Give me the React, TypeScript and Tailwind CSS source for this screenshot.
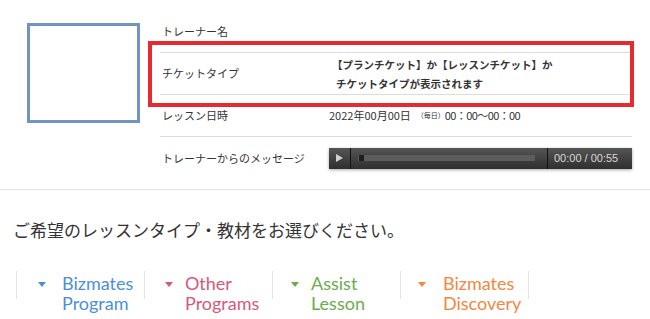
const jp = "font-['Noto_Sans_CJK_JP','Noto_Sans',sans-serif]";

const tabs = [
  { label: ['Bizmates', 'Program'], color: 'text-[#4a90d9]', fill: '#4a90d9', pad: 'pl-[21px]', gap: 'w-[16px]' },
  { label: ['Other', 'Programs'], color: 'text-[#d9577b]', fill: '#d9577b', pad: 'pl-[20px]', gap: 'w-[12px]' },
  { label: ['Assist', 'Lesson'], color: 'text-[#6aac4f]', fill: '#6aac4f', pad: 'pl-[18px]', gap: 'w-[12px]' },
  { label: ['Bizmates', 'Discovery'], color: 'text-[#f5863e]', fill: '#f5863e', pad: 'pl-[17px]', gap: 'w-[17px]' },
];

function Player() {
  return (
    <div className="flex h-[21px] w-[304px] items-stretch bg-gradient-to-b from-[#555] to-[#2f2f2f] shadow-[0_1px_3px_rgba(0,0,0,0.35)]">
      <div className="flex w-[22px] items-center justify-center border-r border-[#111]">
        <svg width="7" height="8" viewBox="0 0 7 8">
          <path d="M0 0 L7 4 L0 8 Z" fill="#d0d0d0" />
        </svg>
      </div>
      <div className="flex flex-1 items-center pl-[7px] pr-[12px]">
        <div className="relative h-[6px] w-full bg-[#5c5c5c]">
          <div className="absolute left-[1px] top-0 h-[6px] w-[5px] bg-[#1e1e1e]" />
        </div>
      </div>
      <div className="flex w-[85px] items-center border-l border-[#111] pl-[6px] font-['Liberation_Sans',sans-serif] text-[11px] text-[#d8d8d8]">
        00:00 / 00:55
      </div>
    </div>
  );
}

export default function App() {
  return (
    <div className={`relative h-[319px] w-[650px] overflow-hidden bg-white ${jp} text-[#333]`}>
      <div className="flex border-b border-[#e3e3e3] pb-[10px] pt-[11px]">
        <div className="ml-[27px] mt-[12px] h-[100px] w-[113px] border-[3px] border-[#7194c3]" />
        <div className="ml-[20px] w-[472px] text-[11px]">
          <div className="flex h-[42px] items-center border-b border-[#dcdcdc] pl-[2px]">トレーナー名</div>
          <div className="flex h-[42px] items-center border-b border-[#dcdcdc]">
            <div className="w-[169px] pl-[2px]">チケットタイプ</div>
            <div className="pl-[3px] text-[10.5px] font-bold leading-[19px]">
              <div>【プランチケット】か【レッスンチケット】か</div>
              <div className="pl-[4px]">チケットタイプが表示されます</div>
            </div>
          </div>
          <div className="flex h-[42px] items-center border-b border-[#dcdcdc]">
            <div className="w-[169px] pl-[2px]">レッスン日時</div>
            <div className="flex items-center">
              <span>2022年00月00日</span>
              <span className="ml-[6px] text-[7px]">（毎日）</span>
              <span className="tracking-[-0.6px]">00：00〜00：00</span>
            </div>
          </div>
          <div className="flex h-[42px] items-center">
            <div className="w-[169px] pl-[2px]">トレーナーからのメッセージ</div>
            <Player />
          </div>
        </div>
      </div>

      <div className="pl-[13px] pt-[28px] text-[17px] leading-[24px] text-[#333]">
        ご希望のレッスンタイプ・教材をお選びください。
      </div>

      <div className="ml-[16px] mt-[29px] flex w-fit border-r border-[#e3e3e3]">
        {tabs.map((t) => (
          <div key={t.label[0] + t.label[1]} className={`flex h-[28px] w-[128px] border-l border-[#e3e3e3] ${t.pad}`}>
            <svg width="8" height="5" viewBox="0 0 8 5" className="mt-[11px] shrink-0">
              <path d="M0 0 L8 0 L4 5 Z" fill={t.fill} />
            </svg>
            <div className={`${t.gap} shrink-0`} />
            <div className={`pt-[2px] font-['Lato',sans-serif] text-[18px] leading-[20px] whitespace-nowrap ${t.color}`}>
              <div>{t.label[0]}</div>
              <div>{t.label[1]}</div>
            </div>
          </div>
        ))}
      </div>

      <div className="absolute left-[148px] top-[41px] h-[66px] w-[486px] border-[4px] border-[#e52b2f]" />
    </div>
  );
}
